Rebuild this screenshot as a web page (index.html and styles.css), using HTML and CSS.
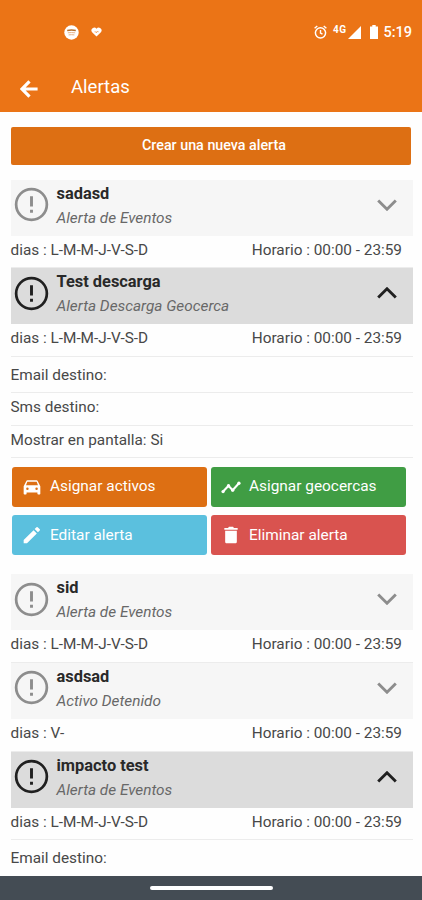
FILE: index.html
```html
<!DOCTYPE html>
<html lang="es">
<head>
    <meta charset="UTF-8">
    <meta name="viewport" content="width=device-width, initial-scale=1.0">
    <title>Alertas</title>
    <link rel="stylesheet" href="styles.css">
</head>
<body>
    <!-- Iconos compartidos -->
    <svg class="sprite">
        <symbol id="aviso" viewBox="0 0 36 36">
            <circle cx="18" cy="18" r="15.8" fill="none" stroke="currentColor" stroke-width="2.8"/>
            <path d="M16.5 9.5h3v10.5h-3zM16.5 23.5h3v3h-3z" fill="currentColor"/>
        </symbol>
        <symbol id="abajo" viewBox="0 0 20 12">
            <path d="M1.2 1.5L10 10.2l8.8-8.7" fill="none" stroke="currentColor" stroke-width="2.9"/>
        </symbol>
        <symbol id="arriba" viewBox="0 0 20 12">
            <path d="M1.2 10.5L10 1.8l8.8 8.7" fill="none" stroke="currentColor" stroke-width="2.9"/>
        </symbol>
    </svg>

    <header class="cabecera">
        <div class="estado">
            <div class="estado-izq">
                <svg width="15" height="15" viewBox="0 0 15 15">
                    <circle cx="7.5" cy="7.5" r="7.2" fill="#fff"/>
                    <path d="M3.2 5.4q4.3-.6 8.6 0" fill="none" stroke="#b5712f" stroke-width="1.5"/>
                    <path d="M3.8 7.8q3.7-.5 7.4 0M4.6 9.9q2.9-.4 5.8 0" fill="none" stroke="#e7b48a"/>
                </svg>
                <svg width="11" height="10" viewBox="0 0 11 10">
                    <path d="M5.5 9.6L1.1 5.2A2.8 2.8 0 0 1 5.5 1.7a2.8 2.8 0 0 1 4.4 3.5z" fill="#fff"/>
                    <path d="M3.6 4.8h1l.8 1 .8-1.6.6.6h.8" fill="none" stroke="#eb7416" stroke-width=".6"/>
                </svg>
            </div>
            <div class="estado-der">
                <svg class="alarma" width="13" height="14" viewBox="0 0 13 14">
                    <circle cx="6.5" cy="7.8" r="5.1" fill="none" stroke="#fff" stroke-width="1.5"/>
                    <path d="M6.5 5v3l2 1.2M.6 3.2L3.3 1M12.4 3.2L9.7 1" fill="none" stroke="#fff" stroke-width="1.4"/>
                </svg>
                <span class="red">4G</span>
                <svg class="senal" width="13" height="13" viewBox="0 0 13 13"><path d="M13 0v13H0z" fill="#fff"/></svg>
                <svg class="bateria" width="8" height="14" viewBox="0 0 8 14"><path d="M2.3 0h3.4v1.4H8V14H0V1.4h2.3z" fill="#fff"/></svg>
                <span class="hora">5:19</span>
            </div>
        </div>
        <div class="barra">
            <svg width="18" height="18" viewBox="0 0 18 18">
                <path d="M17.6 9H2.5M9.5 1.3L2 9l7.5 7.7" fill="none" stroke="#fff" stroke-width="3.2"/>
            </svg>
            <h1 class="titulo">Alertas</h1>
        </div>
    </header>

    <main class="contenido">
        <button class="crear">Crear una nueva alerta</button>

        <section class="alerta">
            <div class="alerta-cab">
                <svg class="aviso"><use href="#aviso"/></svg>
                <div class="alerta-texto">
                    <h2 class="nombre">sadasd</h2>
                    <p class="tipo">Alerta de Eventos</p>
                </div>
                <svg class="flecha"><use href="#abajo"/></svg>
            </div>
            <div class="horario"><span>dias : L-M-M-J-V-S-D</span><span>Horario : 00:00 - 23:59</span></div>
        </section>

        <section class="alerta abierta">
            <div class="alerta-cab">
                <svg class="aviso"><use href="#aviso"/></svg>
                <div class="alerta-texto">
                    <h2 class="nombre">Test descarga</h2>
                    <p class="tipo">Alerta Descarga Geocerca</p>
                </div>
                <svg class="flecha"><use href="#arriba"/></svg>
            </div>
            <div class="horario"><span>dias : L-M-M-J-V-S-D</span><span>Horario : 00:00 - 23:59</span></div>
            <p class="dato dato-email">Email destino:</p>
            <p class="dato">Sms destino:</p>
            <p class="dato">Mostrar en pantalla: Si</p>
            <div class="acciones">
                <button class="accion naranja">
                    <svg class="icono" viewBox="0 0 24 24"><path d="M18.9 5c-.2-.6-.8-1-1.4-1h-11c-.7 0-1.2.4-1.4 1L2 11v9c0 .5.5 1 1 1h1.5c.5 0 1-.5 1-1v-1.5h13V20c0 .5.5 1 1 1H21c.5 0 1-.5 1-1v-9zM6.5 15.500a1.500 1.500 0 1 1 0-3 1.500 1.500 0 0 1 0 3zm11 0a1.500 1.500 0 1 1 0-3 1.500 1.500 0 0 1 0 3zM4.800 10l1.600-4.300h11.200L19.200 10z" fill="#fff"/></svg>
                    <span>Asignar activos</span>
                </button>
                <button class="accion verde">
                    <svg class="icono" viewBox="0 0 24 24"><path d="M2.500 17.500L9 10.500l5 5.300L21.500 7.500" fill="none" stroke="#fff" stroke-width="2.500"/><g fill="#fff"><circle cx="2.500" cy="17.500" r="2"/><circle cx="9" cy="10.500" r="2"/><circle cx="14" cy="15.800" r="2"/><circle cx="21.500" cy="7.500" r="2"/></g></svg>
                    <span>Asignar geocercas</span>
                </button>
                <button class="accion celeste">
                    <svg class="icono" viewBox="0 0 24 24"><path d="M2 18v4h4L17.800 10.100l-3.900-3.900zM21.300 6.600a1 1 0 0 0 0-1.400l-2.500-2.500a1 1 0 0 0-1.400 0l-2.200 2.200 3.900 3.900z" fill="#fff"/></svg>
                    <span>Editar alerta</span>
                </button>
                <button class="accion rojo">
                    <svg class="icono" viewBox="0 0 24 24"><path d="M5 20c0 1.100.9 2 2 2h10c1.100 0 2-.9 2-2V7H5zM20 3.500h-4.500l-1-1.500h-5l-1 1.500H4v2.200h16z" fill="#fff"/></svg>
                    <span>Eliminar alerta</span>
                </button>
            </div>
        </section>

        <section class="alerta">
            <div class="alerta-cab">
                <svg class="aviso"><use href="#aviso"/></svg>
                <div class="alerta-texto">
                    <h2 class="nombre">sid</h2>
                    <p class="tipo">Alerta de Eventos</p>
                </div>
                <svg class="flecha"><use href="#abajo"/></svg>
            </div>
            <div class="horario"><span>dias : L-M-M-J-V-S-D</span><span>Horario : 00:00 - 23:59</span></div>
        </section>

        <section class="alerta">
            <div class="alerta-cab">
                <svg class="aviso"><use href="#aviso"/></svg>
                <div class="alerta-texto">
                    <h2 class="nombre">asdsad</h2>
                    <p class="tipo">Activo Detenido</p>
                </div>
                <svg class="flecha"><use href="#abajo"/></svg>
            </div>
            <div class="horario"><span>dias : V-</span><span>Horario : 00:00 - 23:59</span></div>
        </section>

        <section class="alerta abierta">
            <div class="alerta-cab">
                <svg class="aviso"><use href="#aviso"/></svg>
                <div class="alerta-texto">
                    <h2 class="nombre">impacto test</h2>
                    <p class="tipo">Alerta de Eventos</p>
                </div>
                <svg class="flecha"><use href="#arriba"/></svg>
            </div>
            <div class="horario"><span>dias : L-M-M-J-V-S-D</span><span>Horario : 00:00 - 23:59</span></div>
            <p class="dato dato-email">Email destino:</p>
        </section>
    </main>

    <footer class="navegacion"><div class="gesto"></div></footer>
</body>
</html>
```
FILE: styles.css
```css
* {
    box-sizing: border-box;
}

body {
    display: flex;
    flex-direction: column;
    height: 900px;
    margin: 0;
    overflow: hidden;
    background-color: #fefefe;
    color: #484848;
    font-family: Roboto, sans-serif;
    font-size: 15.35px;
}

h1, h2, p {
    margin: 0;
}

button {
    border: none;
    padding: 0;
    color: #fff;
    font-family: inherit;
    cursor: pointer;
}

svg {
    flex-shrink: 0;
}

.sprite {
    display: none;
}

/* Cabecera */
.cabecera {
    flex: none;
    height: 112px;
    background-color: #eb7416;
    color: #fff;
}

.estado {
    display: flex;
    justify-content: space-between;
    align-items: center;
    height: 64px;
    padding: 0 10px 0 63.5px;
}

.estado-izq,
.estado-der {
    display: flex;
    align-items: center;
}

.estado-izq {
    gap: 12px;
}

.red {
    margin: 0 2px 5px 6px;
    font-size: 10px;
    font-weight: 700;
    letter-spacing: 0.4px;
}

.bateria {
    margin-left: 9px;
}

.hora {
    margin-left: 5px;
    font-size: 14.5px;
    font-weight: 500;
}

.barra {
    display: flex;
    align-items: center;
    height: 48px;
    padding: 2px 19.5px 0;
    gap: 33.5px;
}

.titulo {
    padding-bottom: 4px;
    font-size: 18.5px;
    font-weight: 400;
}

/* Lista de alertas */
.contenido {
    flex: 1;
    min-height: 0;
    padding: 15px 9px 0 10.5px;
    overflow: hidden;
}

.crear {
    display: block;
    width: 400px;
    height: 37.5px;
    margin-bottom: 15px;
    padding: 0 0 2px 7px;
    border-radius: 2px;
    background-color: #dd6f13;
    font-size: 14.3px;
    font-weight: 500;
}

.alerta-cab {
    display: flex;
    height: 56px;
    padding: 0 16px 0 3px;
    background-color: #f6f6f6;
    color: #8d8d8d;
}

.aviso {
    width: 35px;
    height: 35px;
    margin-top: 7.5px;
}

.alerta-texto {
    flex: 1;
    margin-left: 8px;
}

.nombre {
    height: 27px;
    color: #292929;
    font-size: 16.4px;
    font-weight: 700;
    line-height: 28px;
}

.tipo {
    color: #686868;
    font-size: 15.35px;
    font-style: italic;
    line-height: 22px;
}

.flecha {
    width: 20px;
    height: 12px;
    margin-top: 19px;
}

.abierta .alerta-cab {
    background-color: #dcdcdc;
    color: #202020;
}

.horario {
    display: flex;
    justify-content: space-between;
    height: 32.6px;
    padding-right: 11px;
    border-bottom: 1px solid #ececec;
    line-height: 28px;
}

.dato {
    height: 32.5px;
    border-bottom: 1px solid #ececec;
    line-height: 29px;
}

.dato-email {
    height: 36.5px;
    line-height: 37px;
}

.acciones {
    display: grid;
    grid-template-columns: 195px 195px;
    gap: 8px 4px;
    padding: 8.6px 1.5px 19px;
}

.accion {
    display: flex;
    align-items: center;
    height: 40.3px;
    padding: 0 0 1px 10px;
    border-radius: 3px;
    font-size: 15.4px;
}

.icono {
    width: 20px;
    height: 20px;
    margin: 1px 8px 0 0;
}

.naranja {
    background-color: #dd6f13;
}

.verde {
    background-color: #409d44;
}

.celeste {
    background-color: #5bc0de;
}

.rojo {
    background-color: #d9534f;
}

/* Barra de gestos */
.navegacion {
    display: flex;
    flex: none;
    justify-content: center;
    align-items: center;
    height: 24px;
    background-color: #444c54;
}

.gesto {
    width: 123px;
    height: 4px;
    border-radius: 2px;
    background-color: #fff;
}
```
